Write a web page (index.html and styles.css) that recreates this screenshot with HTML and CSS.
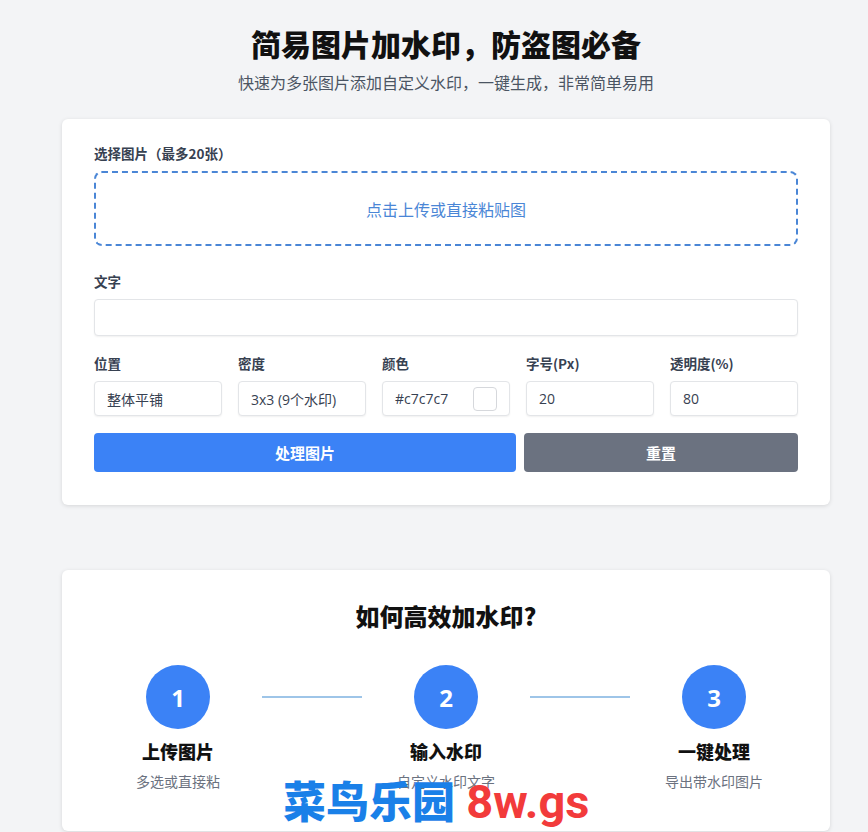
FILE: index.html
```html
<!DOCTYPE html>
<html lang="zh">
<head>
<meta charset="utf-8">
<title>简易图片加水印</title>
<link rel="stylesheet" href="styles.css">
</head>
<body>
<div class="page">
  <header class="hero">
    <h1 class="hero-title">简易图片加水印，防盗图必备</h1>
    <p class="hero-sub">快速为多张图片添加自定义水印，一键生成，非常简单易用</p>
  </header>

  <section class="card form-card">
    <div class="label">选择图片（最多20张）</div>
    <div class="upload">点击上传或直接粘贴图</div>

    <div class="label label-gap">文字</div>
    <div class="input input-wide"></div>

    <div class="fields">
      <div class="field">
        <div class="label">位置</div>
        <div class="input">整体平铺</div>
      </div>
      <div class="field">
        <div class="label">密度</div>
        <div class="input">3x3 (9个水印)</div>
      </div>
      <div class="field">
        <div class="label">颜色</div>
        <div class="input input-color"><span>#c7c7c7</span><span class="swatch"></span></div>
      </div>
      <div class="field">
        <div class="label">字号(Px)</div>
        <div class="input">20</div>
      </div>
      <div class="field">
        <div class="label">透明度(%)</div>
        <div class="input">80</div>
      </div>
    </div>

    <div class="actions">
      <button class="btn btn-primary">处理图片</button>
      <button class="btn btn-gray">重置</button>
    </div>
  </section>

  <section class="card steps-card">
    <h2 class="steps-title">如何高效加水印?</h2>
    <div class="steps">
      <div class="step">
        <div class="circle">1</div>
        <div class="step-name">上传图片</div>
        <div class="step-desc">多选或直接粘</div>
      </div>
      <div class="connector"></div>
      <div class="step">
        <div class="circle">2</div>
        <div class="step-name">输入水印</div>
        <div class="step-desc">自定义水印文字</div>
      </div>
      <div class="connector"></div>
      <div class="step">
        <div class="circle">3</div>
        <div class="step-name">一键处理</div>
        <div class="step-desc">导出带水印图片</div>
      </div>
    </div>
  </section>
</div>
<div class="watermark"><span class="wm-cn">菜鸟乐园</span> <span class="wm-en">8w.gs</span></div>
</body>
</html>
```

FILE: styles.css
```css
html, body {
  margin: 0;
  padding: 0;
}
body {
  background: #f3f4f6;
  font-family: "Open Sans", "Noto Sans CJK SC", sans-serif;
  color: #333;
  height: 832px;
  overflow: hidden;
  position: relative;
}
.page {
  width: 768px;
  margin-left: 62px;
}
.hero {
  text-align: center;
  padding-top: 24px;
}
.hero-title {
  margin: 0;
  font-family: "Noto Sans CJK SC", sans-serif;
  font-size: 30px;
  line-height: 38px;
  font-weight: 900;
  color: #111;
}
.hero-sub {
  margin: 9px 0 0;
  font-family: "Noto Sans CJK SC", sans-serif;
  font-size: 16px;
  line-height: 22px;
  color: #4b5563;
}
.card {
  background: #fff;
  border-radius: 6px;
  box-shadow: 0 1px 4px rgba(0,0,0,0.12);
}
.form-card {
  margin-top: 26px;
  padding: 24px 32px 33px;
}
.label {
  font-family: "Noto Sans CJK SC", sans-serif;
  font-size: 13.5px;
  line-height: 20px;
  font-weight: 700;
  color: #374151;
  margin-bottom: 8px;
}
.label-gap {
  margin-top: 25px;
}
.upload {
  height: 71px;
  border: 2px dashed #4a86d6;
  border-radius: 8px;
  display: flex;
  align-items: center;
  justify-content: center;
  font-family: "Noto Sans CJK SC", sans-serif;
  font-size: 16px;
  color: #4a86d6;
}
.input {
  box-sizing: border-box;
  height: 35px;
  border: 1px solid #e3e5e8;
  border-radius: 4px;
  box-shadow: 0 1px 2px rgba(0,0,0,0.06);
  padding: 0 12px;
  display: flex;
  align-items: center;
  font-size: 14px;
  color: #374151;
  background: #fff;
}
.input-wide {
  height: 37px;
}
.fields {
  margin-top: 17px;
  display: grid;
  grid-template-columns: repeat(5, 128px);
  column-gap: 16px;
}
.input-color {
  justify-content: space-between;
  padding-right: 12px;
}
.swatch {
  width: 22px;
  height: 22px;
  border: 1px solid #d6d8dc;
  border-radius: 4px;
  background: #fff;
}
.actions {
  margin-top: 17px;
  display: grid;
  grid-template-columns: 422px 1fr;
  column-gap: 8px;
}
.btn {
  height: 39px;
  border: none;
  border-radius: 4px;
  color: #fff;
  font-family: "Noto Sans CJK SC", sans-serif;
  font-size: 15px;
  font-weight: 700;
  padding: 0;
}
.btn-primary {
  background: #3b82f6;
}
.btn-gray {
  background: #6b7280;
}
.steps-card {
  margin-top: 65px;
  padding: 30px 32px 40px;
}
.steps-title {
  margin: 0;
  text-align: center;
  font-family: "Noto Sans CJK SC", sans-serif;
  font-size: 24px;
  line-height: 32px;
  font-weight: 900;
  color: #111;
}
.steps {
  margin-top: 33px;
  display: flex;
  align-items: flex-start;
}
.step {
  width: 168px;
  display: flex;
  flex-direction: column;
  align-items: center;
}
.connector {
  width: 100px;
  height: 2px;
  margin-top: 31px;
  background: #9ec5e8;
}
.circle {
  width: 64px;
  height: 64px;
  border-radius: 50%;
  background: #3b82f6;
  color: #fff;
  display: flex;
  align-items: center;
  justify-content: center;
  font-family: "Open Sans", sans-serif;
  font-size: 24px;
  font-weight: 700;
}
.step-name {
  margin-top: 10px;
  font-family: "Noto Sans CJK SC", sans-serif;
  font-size: 18px;
  line-height: 24px;
  font-weight: 900;
  color: #111;
}
.step-desc {
  margin-top: 8px;
  font-family: "Noto Sans CJK SC", sans-serif;
  font-size: 14px;
  line-height: 20px;
  color: #6b7280;
}
.watermark {
  position: absolute;
  left: 283px;
  top: 771px;
  white-space: nowrap;
  font-size: 43px;
  line-height: 56px;
  font-weight: 900;
}
.wm-cn {
  font-family: "Noto Sans CJK SC", sans-serif;
  color: #1a80e8;
}
.wm-en {
  font-family: "Roboto", sans-serif;
  font-weight: 700;
  color: #f23b3b;
  font-size: 47px;
}
```
